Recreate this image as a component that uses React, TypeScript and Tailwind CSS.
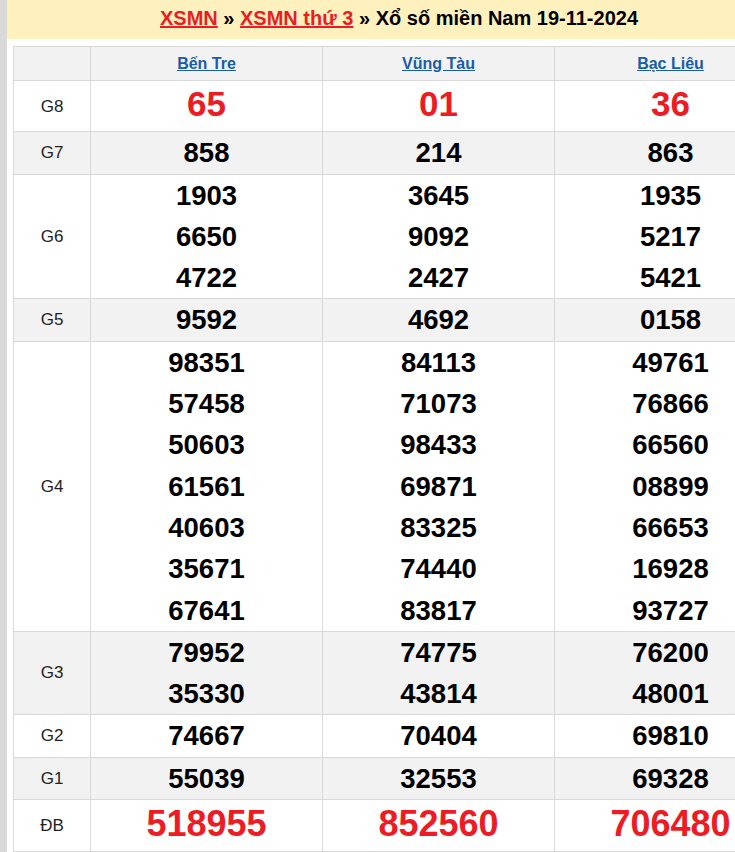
import React from "react";

type Row = { label: string; values: string[][]; kind?: "g8" | "db"; shade: boolean };

const rows: Row[] = [
  { label: "G8", values: [["65"], ["01"], ["36"]], kind: "g8", shade: false },
  { label: "G7", values: [["858"], ["214"], ["863"]], shade: true },
  {
    label: "G6",
    values: [
      ["1903", "6650", "4722"],
      ["3645", "9092", "2427"],
      ["1935", "5217", "5421"],
    ],
    shade: false,
  },
  { label: "G5", values: [["9592"], ["4692"], ["0158"]], shade: true },
  {
    label: "G4",
    values: [
      ["98351", "57458", "50603", "61561", "40603", "35671", "67641"],
      ["84113", "71073", "98433", "69871", "83325", "74440", "83817"],
      ["49761", "76866", "66560", "08899", "66653", "16928", "93727"],
    ],
    shade: false,
  },
  {
    label: "G3",
    values: [
      ["79952", "35330"],
      ["74775", "43814"],
      ["76200", "48001"],
    ],
    shade: true,
  },
  { label: "G2", values: [["74667"], ["70404"], ["69810"]], shade: false },
  { label: "G1", values: [["55039"], ["32553"], ["69328"]], shade: true },
  { label: "ĐB", values: [["518955"], ["852560"], ["706480"]], kind: "db", shade: false },
];

const stations = ["Bến Tre", "Vũng Tàu", "Bạc Liêu"];

export default function App() {
  return (
    <div
      className="flex w-[735px] h-[852px] overflow-hidden bg-white"
      style={{ fontFamily: '"Liberation Sans", Arial, sans-serif' }}
    >
      <div className="w-[7px] shrink-0 bg-[#d9d9d9]" />
      <div className="w-[784px] shrink-0 flex flex-col">
        <div className="h-[41px] bg-[#fff1bd] flex items-start justify-center pt-[6px]">
          <h1 className="text-[20px] leading-[24px] font-bold text-black whitespace-nowrap">
            <a className="text-[#ed1c24] underline">XSMN</a>
            <span> » </span>
            <a className="text-[#ed1c24] underline">XSMN thứ 3</a>
            <span> » Xổ số miền Nam 19-11-2024</span>
          </h1>
        </div>
        <div className="pl-[6px] pt-[7px]">
          <div className="grid grid-cols-[77px_232px_232px_232px] border-t border-l border-[#d9d9d9] w-[773px]">
            <div className="h-[34px] bg-[#f2f2f2] border-r border-b border-[#d9d9d9]" />
            {stations.map((s) => (
              <div
                key={s}
                className="h-[34px] bg-[#f2f2f2] border-r border-b border-[#d9d9d9] flex items-center justify-center"
              >
                <a className="text-[16px] font-bold text-[#1a5ca8] underline">{s}</a>
              </div>
            ))}
            {rows.map((r) => {
              const bg = r.shade ? "bg-[#f2f2f2]" : "bg-white";
              return (
                <React.Fragment key={r.label}>
                  <div
                    className={`${bg} border-r border-b border-[#d9d9d9] flex items-center justify-center text-[17px] text-[#222]`}
                  >
                    {r.label}
                  </div>
                  {r.values.map((col, ci) => (
                    <div
                      key={ci}
                      className={`${bg} border-r border-b border-[#d9d9d9] flex flex-col items-center justify-center`}
                    >
                      {col.map((v, vi) =>
                        r.kind === "g8" ? (
                          <div key={vi} className="text-[35px] leading-[46px] pb-[4px] font-bold text-[#ed1c24]">
                            {v}
                          </div>
                        ) : r.kind === "db" ? (
                          <div key={vi} className="text-[36px] leading-[48px] pb-[3px] font-bold text-[#ed1c24]">
                            {v}
                          </div>
                        ) : (
                          <div key={vi} className="text-[27.5px] leading-[41.3px] font-bold text-black">
                            {v}
                          </div>
                        )
                      )}
                    </div>
                  ))}
                </React.Fragment>
              );
            })}
          </div>
        </div>
      </div>
    </div>
  );
}
